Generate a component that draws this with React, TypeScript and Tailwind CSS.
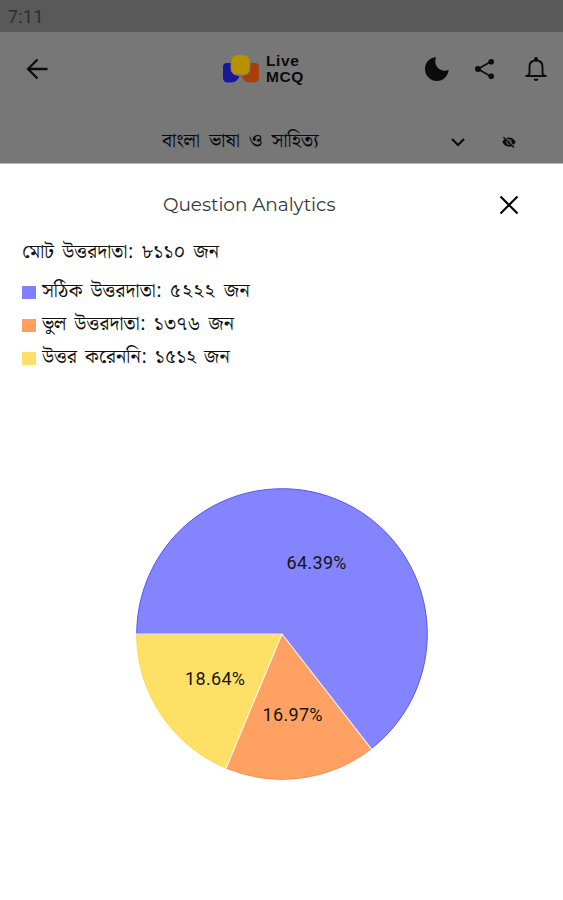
import React from "react";

const BENGALI = "font-['Noto_Serif_Bengali','Noto_Sans_Bengali','Liberation_Serif',serif]";

function Logo() {
  return (
    <svg className="h-[30px] w-[38px]" viewBox="0 0 38 30">
      <path d="M5 9H9V16Q10 21 17.5 22Q15 28.5 9.5 28.5H6Q1 28.5 1 23.5V13Q1 9 5 9Z" fill="#17179a" />
      <path d="M33 9H28V16Q27 21 19.5 22Q22 28.5 28 28.5H31.5Q37 28.5 37 23V13Q37 9 33 9Z" fill="#a63f0a" />
      <rect x="9" y=".7" width="19" height="20.3" rx="6" fill="#b89200" stroke="#777777" strokeWidth="1" />
    </svg>
  );
}

function Header() {
  return (
    <header className="h-[131px] bg-[#777777] text-[#0b0b0b]">
      <div className="flex h-[74px] items-center">
        <svg className="ml-[25px] h-6 w-6" viewBox="0 0 24 24" fill="none" stroke="currentColor" strokeWidth="2.3">
          <path d="M12.5 2.5L3 12L12.5 21.5M3 12H22.5" />
        </svg>
        <div className="ml-[173px] flex items-center gap-[6px]">
          <Logo />
          <div className="flex h-[32px] w-[43px] flex-col font-['Liberation_Sans',sans-serif] text-[15.5px] font-bold leading-[16px] tracking-[0.6px]">
            <span className="block h-[16px]">Live</span>
            <span className="block h-[16px]">MCQ</span>
          </div>
        </div>
        <svg className="ml-[115px] h-[26px] w-[26px]" viewBox="0 0 26 26" fill="currentColor">
          <path d="M12 1C5.500 1.700 1 6.500 1 13A12 12 0 0 0 13 25C19 25 24 20.500 24.700 13.800C18.500 17.200 8.500 11.500 12 1Z" />
        </svg>
        <svg className="ml-[24px] h-[22px] w-[22px]" viewBox="0 0 22 22" fill="currentColor">
          <path d="M17 3.5L4 11L17 18.5" fill="none" stroke="currentColor" strokeWidth="1.6" />
          <circle cx="17.2" cy="3.7" r="2.8" /><circle cx="4" cy="11" r="3" /><circle cx="17.2" cy="18.3" r="2.8" />
        </svg>
        <svg className="ml-[28px] h-[26px] w-[24px]" viewBox="0 0 24 26" fill="none" stroke="currentColor" strokeWidth="1.9">
          <path d="M5.5 17.5V11C5.5 7 8 4.5 12 4.5S18.5 7 18.5 11V17.5L20.5 20H3.5Z" />
          <path d="M10 3A2 2 0 0 1 14 3V5H10ZM1.5 19.1H22.5V21H1.5ZM9.5 22.8H14.5Q14 25 12 25T9.5 22.8Z" fill="currentColor" stroke="none" />
        </svg>
      </div>
      <div className="flex h-[68px] items-center pl-[162px]">
        <div className={`${BENGALI} w-[158px] whitespace-nowrap pt-[2px] text-[19.7px] leading-6 [word-spacing:4px]`}>বাংলা ভাষা ও সাহিত্য</div>
        <svg className="ml-[130px] mt-1 h-4 w-4" viewBox="0 0 16 16" fill="none" stroke="currentColor" strokeWidth="2.2">
          <path d="M2 5L8 11L14 5" />
        </svg>
        <svg className="ml-[36px] mt-1 h-[14px] w-[14px]" viewBox="0 0 24 24" fill="currentColor" stroke="currentColor" strokeWidth=".6">
          <path d="M12 7c2.760 0 5 2.240 5 5 0 .65-.13 1.260-.36 1.830l2.920 2.920c1.510-1.260 2.700-2.890 3.430-4.750-1.730-4.390-6-7.500-11-7.500-1.400 0-2.740.25-3.980.7l2.160 2.160C10.740 7.130 11.350 7 12 7zM2 4.270l2.280 2.280.46.46C3.080 8.300 1.780 10.020 1 12c1.730 4.390 6 7.500 11 7.500 1.550 0 3.030-.3 4.380-.84l.42.42L19.730 22 21 20.730 3.270 3 2 4.270zM7.530 9.800l1.550 1.550c-.05.21-.08.43-.08.65 0 1.660 1.340 3 3 3 .22 0 .44-.03.65-.08l1.550 1.550c-.67.33-1.410.53-2.200.53-2.760 0-5-2.240-5-5 0-.79.2-1.530.53-2.200zm4.310-.78l3.150 3.150.02-.16c0-1.660-1.340-3-3-3l-.17.01z" />
        </svg>
      </div>
    </header>
  );
}

const legend = [
  { color: "bg-[#8080ff]", label: "সঠিক উত্তরদাতা:", count: "৫২২২", spacing: "tracking-[1.6px]" },
  { color: "bg-[#ffa062]", label: "ভুল উত্তরদাতা:", count: "১৩৭৬", spacing: "tracking-normal" },
  { color: "bg-[#ffe066]", label: "উত্তর করেননি:", count: "১৫১২", spacing: "tracking-normal" },
];

function PieChart() {
  return (
    <svg className="mx-auto h-[294px] w-[294px]" viewBox="-147 -147 294 294">
      <g strokeWidth="1">
        <path d="M0 0L-145.3 0A145.3 145.3 0 1 1 89.3 114.6Z" fill="#8484ff" stroke="#5b55f8" />
        <path d="M0 .8L89 115A145.3 145.3 0 0 1 -55.6 134.3Z" fill="#ffa163" stroke="#ff8d49" />
        <path d="M-.5 .8L-56 134.1A145.3 145.3 0 0 1 -145.3 .8Z" fill="#ffe066" stroke="#ffd83f" />
      </g>
      <path d="M-146 0H0L89.5 115.2M0 0L-56 134.2" fill="none" stroke="#fff5ed" strokeWidth="1.2" />
      <g className="font-['Roboto',sans-serif] text-[18px]" fill="#17140f">
        <text x="4.5" y="-65" textLength="60">64.39%</text>
        <text x="-97" y="51" textLength="60">18.64%</text>
        <text x="-19.5" y="86.5" textLength="60">16.97%</text>
      </g>
    </svg>
  );
}

export default function App() {
  return (
    <div className="flex h-[900px] w-[563px] flex-col overflow-hidden bg-white">
      <div className="flex h-8 shrink-0 items-center bg-[#595959] pl-2 pt-[2px] font-['Roboto',sans-serif] text-[17.5px] tracking-[0.5px] text-[#2b2b2b]">7:11</div>
      <div className="h-[131px] shrink-0"><Header /></div>
      <div className="h-px shrink-0 bg-[#b5b5b1]" />
      <main className="flex flex-1 flex-col">
        <div className="flex h-[68px] shrink-0 items-center pt-[13px]">
          <h1 className="ml-[163px] w-[173px] whitespace-nowrap font-['Montserrat','Inter',sans-serif] text-[18.5px] font-normal tracking-[-0.05px] text-[#383838]">Question Analytics</h1>
          <svg className="ml-[163px] h-5 w-5" viewBox="0 0 20 20" fill="none" stroke="#000" strokeWidth="2.2"><path d="M1.5 1.5L18.5 18.5M18.5 1.5L1.5 18.5" /></svg>
        </div>
        <div className={`${BENGALI} ml-[22px] whitespace-nowrap text-[19.5px] text-[#111] [word-spacing:3px]`}>
          <div className="flex h-[43px] items-center pb-[2px]">মোট উত্তরদাতা: ৮১১০ জন</div>
          {legend.map((item) => (
            <div className="flex h-[33px] items-center gap-[6px]" key={item.label}>
              <span className={`mt-[1px] h-[13px] w-[14px] ${item.color}`} />
              <span className="pt-px">{item.label} <span className={item.spacing}>{item.count}</span> জন</span>
            </div>
          ))}
        </div>
        <div className="mt-[113px] flex"><PieChart /></div>
      </main>
    </div>
  );
}
